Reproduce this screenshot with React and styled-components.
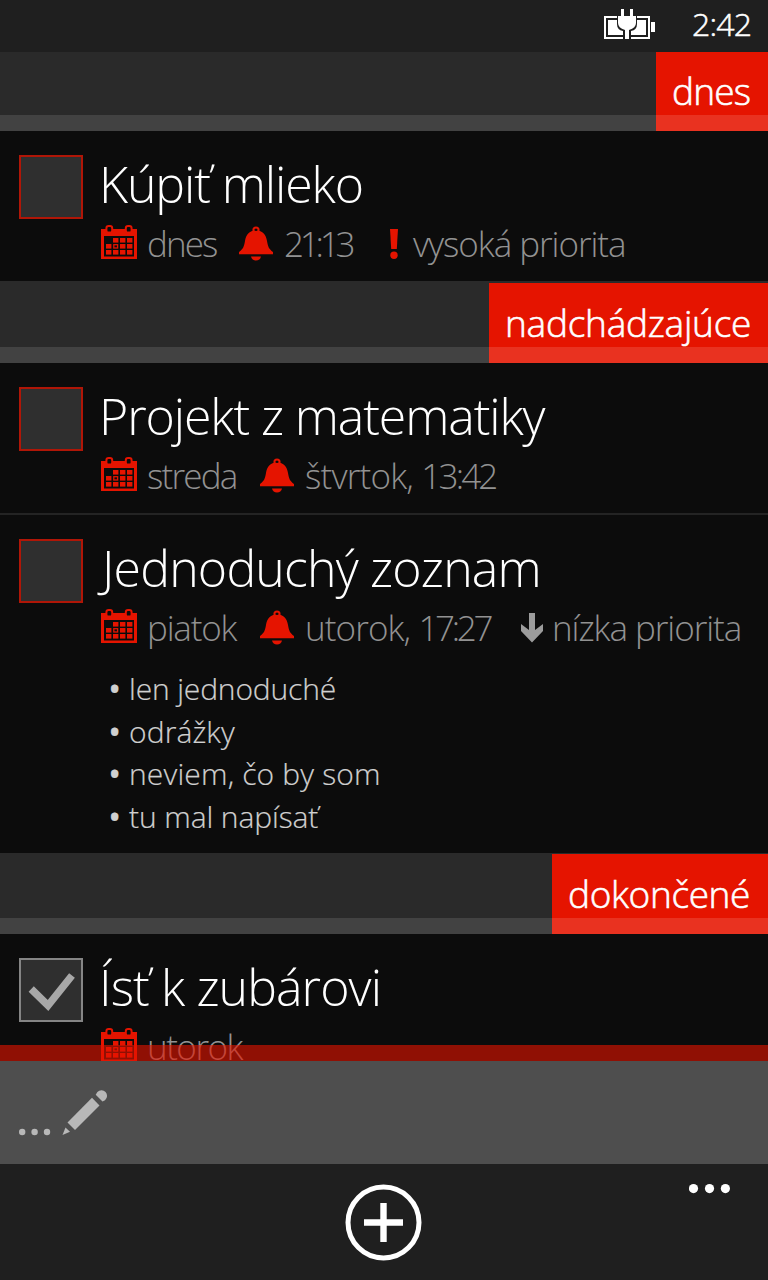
import React from "react";
import styled, { createGlobalStyle } from "styled-components";

const GlobalStyle = createGlobalStyle`
  * { box-sizing: border-box; }
  body {
    margin: 0;
    background: #0c0c0c;
    font-family: "Open Sans", "Noto Sans", sans-serif;
    font-weight: 300;
  }
  svg { display: block; }
`;

const accent = "#e51400";

const Screen = styled.div`
  width: 768px;
  height: 1280px;
  display: flex;
  flex-direction: column;
  overflow: hidden;
  background: #0c0c0c;
  color: #fff;
`;

const StatusBar = styled.header`
  flex: none;
  height: 52px;
  display: flex;
  align-items: flex-start;
  justify-content: flex-end;
  padding: 8px 17px 0 0;
  background: #1f1f1f;
`;

const Clock = styled.span`
  width: 59px;
  margin-left: 36px;
  margin-top: -4px;
  font-size: 32px;
  line-height: 40px;
  font-weight: 300;
  -webkit-text-stroke: 0.5px #fff;
  letter-spacing: ${(p) => p.$spacing}px;
  white-space: nowrap;
`;

const TaskList = styled.main`
  flex: 1;
  min-height: 0;
  overflow: hidden;
`;

const GroupHeader = styled.div`
  display: flex;
  justify-content: flex-end;
  height: ${(p) => p.$height}px;
  padding-top: ${(p) => p.$height - 80}px;
  background: linear-gradient(to top, #424242 16px, #2a2a2a 16px);
`;

const GroupTag = styled.h2`
  margin: ${(p) => (p.$raised ? "-1px 0 0" : "0")};
  width: ${(p) => p.$width}px;
  height: 80px;
  padding: 15px 0 0 16px;
  background: linear-gradient(to top, #e93220 16px, ${accent} 16px);
  font-size: 37px;
  line-height: 50px;
  font-weight: 300;
  -webkit-text-stroke: 0.6px #fff;
  letter-spacing: ${(p) => p.$spacing}px;
  white-space: nowrap;
`;

const Task = styled.article`
  display: flex;
  align-items: flex-start;
  height: ${(p) => p.$height}px;
  padding: 21px 0 0 19px;
  border-bottom: ${(p) => (p.$divided ? "2px solid #242424" : "none")};
`;

const CheckBox = styled.div`
  flex: none;
  width: 64px;
  height: 64px;
  margin: 3px 17px 0 0;
  border: 2px solid ${(p) => (p.$done ? "#858585" : "#b01607")};
  background: #2f2f2f;
`;

const TaskTitle = styled.h1`
  margin: 0 0 0 ${(p) => p.$indent ?? -1}px;
  font-size: 50px;
  line-height: 64px;
  font-weight: 300;
  letter-spacing: ${(p) => p.$spacing}px;
  white-space: nowrap;
`;

const MetaRow = styled.div`
  display: flex;
  height: 48px;
  margin-top: 4px;
  padding-left: 1px;
`;

const Meta = styled.div`
  flex: none;
  display: flex;
  width: ${(p) => p.$width}px;
`;

const MetaIcon = styled.span`
  flex: none;
  width: ${(p) => p.$width}px;
  padding-top: 5px;
`;

const MetaText = styled.span`
  font-size: 35px;
  line-height: 48px;
  color: #929292;
  letter-spacing: ${(p) => p.$spacing}px;
  white-space: nowrap;
`;

const Time = styled.span`
  letter-spacing: ${(p) => p.$spacing}px;
`;

const Notes = styled.ul`
  list-style: none;
  margin: 16px 0 0;
  padding: 0 0 0 9px;
  color: #d0d0d0;
`;

const Note = styled.li`
  display: flex;
  font-size: 30px;
  line-height: 42.7px;
  -webkit-text-stroke: 0.2px #d0d0d0;
  letter-spacing: ${(p) => p.$spacing}px;
  white-space: nowrap;
`;

const Bullet = styled.span`
  width: 20px;
  font-weight: 600;
`;

const ComposeBar = styled.section`
  flex: none;
  position: relative;
  height: 119px;
  margin-top: -16px;
  padding: 28px 0 0 19px;
  border-top: 16px solid rgba(229, 20, 0, 0.61);
  background: #4e4e4e;
  background-clip: padding-box;
`;

const AppBar = styled.footer`
  flex: none;
  height: 116px;
  display: grid;
  grid-template-columns: 345px 1fr auto;
  align-items: start;
  padding: 20px 38px 0 0;
  background: #1f1f1f;
`;

const AddButton = styled.div`
  grid-column: 2;
`;

function BatteryIcon() {
  return (
    <svg width="52" height="32" viewBox="0 0 52 32">
      <path d="M1 9H45V30H1Z" fill="none" stroke="#fff" strokeWidth="2" />
      <path d="M4 12H42V27H4Z" fill="#fff" />
      <path d="M47 14H51V24H47Z" fill="#fff" />
      <path d="M13 6H33V16Q33 22 27 23V32H19V23Q13 22 13 16Z" fill="#1f1f1f" />
      <path d="M17 1H20V8H26V1H29V8H32V15Q32 20 25 22V31H21V22Q14 20 14 15V8H17Z" fill="#fff" />
    </svg>
  );
}

function CalendarIcon() {
  const cells = [[12, 13], [19, 13], [26, 13], [5, 19], [19, 19], [26, 19], [5, 25], [12, 25], [19, 25], [26, 25]];
  return (
    <svg width="36" height="36" viewBox="0 0 36 36">
      <path d="M0 4H36V34H0ZM3 11V31.5H33V11Z" fill={accent} fillRule="evenodd" />
      <rect x="5.4" y="1" width="5.8" height="6.6" rx="2.2" fill="#0c0c0c" stroke={accent} strokeWidth="2" />
      <rect x="24.8" y="1" width="5.8" height="6.6" rx="2.2" fill="#0c0c0c" stroke={accent} strokeWidth="2" />
      {cells.map(([x, y]) => (
        <rect key={`${x}-${y}`} x={x} y={y} width="5.4" height="4.6" fill={accent} />
      ))}
      <rect x="12.8" y="19.7" width="3.8" height="3.3" fill="none" stroke={accent} strokeWidth="1.3" />
    </svg>
  );
}

function BellIcon() {
  return (
    <svg width="34" height="36" viewBox="0 0 34 36">
      <circle cx="17" cy="5" r="2.6" fill="none" stroke={accent} strokeWidth="2" />
      <path d="M17 5.6C24 5.6 27 10 28 16C29 22 30 24 34 27V29.3H0V27C4 24 5 22 6 16C7 10 10 5.6 17 5.6Z" fill={accent} />
      <circle cx="17" cy="5" r="1.1" fill="#0c0c0c" />
      <path d="M12 31.5H22Q21 35.6 17 35.6Q13 35.6 12 31.5Z" fill={accent} />
    </svg>
  );
}

function HighIcon() {
  return (
    <svg width="8" height="36" viewBox="0 0 8 36">
      <path d="M0 4H8L6.8 24H1.2Z" fill={accent} />
      <circle cx="4" cy="30.2" r="3.7" fill={accent} />
    </svg>
  );
}

function LowIcon() {
  return (
    <svg width="22" height="36" viewBox="0 0 22 36">
      <path d="M8 4H14V21L22 15V22L11 33.5L0 22V15L8 21Z" fill="#9c9c9c" />
    </svg>
  );
}

function CheckIcon() {
  return (
    <svg width="60" height="60" viewBox="0 0 60 60">
      <path d="M10.2 29L27 45.5L51 15.5" fill="none" stroke="#a8a8a8" strokeWidth="7.4" />
    </svg>
  );
}

function ComposeIcon() {
  return (
    <svg width="90" height="50" viewBox="0 0 90 50">
      <g fill="#b8b8b8">
        <circle cx="3.2" cy="43" r="3.2" />
        <circle cx="15.6" cy="43" r="3.2" />
        <circle cx="28" cy="43" r="3.2" />
        <path d="M43.5 46L46.5 38.5L51 42.7Z" />
        <path d="M48.5 33.5L73 8.8L80.5 16.5L56 41Z" />
        <path d="M76.7 5.8L78.4 3A5.6 5.6 0 1 1 86 11.2L83.5 12.6Z" />
      </g>
    </svg>
  );
}

function AddIcon() {
  return (
    <svg width="78" height="78" viewBox="0 0 78 78">
      <circle cx="38.5" cy="38.5" r="35.5" fill="none" stroke="#fff" strokeWidth="5" />
      <path d="M19 38.5H58M38.5 19V58" stroke="#fff" strokeWidth="6.4" />
    </svg>
  );
}

function MoreIcon() {
  return (
    <svg width="41" height="10" viewBox="0 0 41 10" fill="#fff">
      <circle cx="4.5" cy="4.6" r="4.6" />
      <circle cx="20.5" cy="4.6" r="4.6" />
      <circle cx="36.4" cy="4.6" r="4.6" />
    </svg>
  );
}

const icons = {
  date: { Icon: CalendarIcon, width: 46 },
  alarm: { Icon: BellIcon, width: 45 },
  high: { Icon: HighIcon, width: 23 },
  low: { Icon: LowIcon, width: 31 },
};

function Group({ label, width, height, spacing, raised }) {
  return (
    <GroupHeader $height={height}>
      <GroupTag $width={width} $spacing={spacing} $raised={raised}>{label}</GroupTag>
    </GroupHeader>
  );
}

function TaskItem({ title, indent, spacing, height, done, divided, meta, notes }) {
  return (
    <Task $height={height} $divided={divided}>
      <CheckBox $done={done}>{done && <CheckIcon />}</CheckBox>
      <div>
        <TaskTitle $spacing={spacing} $indent={indent}>{title}</TaskTitle>
        <MetaRow>
          {meta.map(({ kind, text, width, spacing: s, time, timeSpacing }) => {
            const { Icon, width: iconWidth } = icons[kind];
            return (
              <Meta key={kind} $width={width}>
                <MetaIcon $width={iconWidth}><Icon /></MetaIcon>
                <MetaText $spacing={s}>
                  {text}
                  {time && <Time $spacing={timeSpacing}>{time}</Time>}
                </MetaText>
              </Meta>
            );
          })}
        </MetaRow>
        {notes && (
          <Notes>
            {notes.map(([text, s]) => (
              <Note key={text} $spacing={s}><Bullet>•</Bullet>{text}</Note>
            ))}
          </Notes>
        )}
      </div>
    </Task>
  );
}

export default function App() {
  return (
    <>
      <GlobalStyle />
      <Screen>
        <StatusBar>
          <BatteryIcon />
          <Clock $spacing={-0.8}>2:42</Clock>
        </StatusBar>
        <TaskList>
          <Group label="dnes" width={112} height={79} spacing={-0.8} raised />
          <TaskItem
            title="Kúpiť mlieko" spacing={-1.1} height={150}
            meta={[
              { kind: "date", text: "dnes", width: 138, spacing: -1.9 },
              { kind: "alarm", time: "21:13", timeSpacing: -4.2, width: 151, spacing: 0 },
              { kind: "high", text: "vysoká priorita", width: 240, spacing: -1.05 },
            ]}
          />
          <Group label="nadchádzajúce" width={279} height={82} spacing={-0.25} />
          <TaskItem
            title="Projekt z matematiky" spacing={-1.1} height={152} divided
            meta={[
              { kind: "date", text: "streda", width: 159, spacing: -1.8 },
              { kind: "alarm", text: "štvrtok, ", time: "13:42", timeSpacing: -2.8, width: 240, spacing: -0.8 },
            ]}
          />
          <TaskItem
            title="Jednoduchý zoznam" indent={2} spacing={-0.8} height={338}
            meta={[
              { kind: "date", text: "piatok", width: 159, spacing: -1.2 },
              { kind: "alarm", text: "utorok, ", time: "17:27", timeSpacing: -3.3, width: 261, spacing: -0.9 },
              { kind: "low", text: "nízka priorita", width: 230, spacing: -1.05 },
            ]}
            notes={[["len jednoduché", -0.15], ["odrážky", 0.1], ["neviem, čo by som", 0.15], ["tu mal napísať", -0.1]]}
          />
          <Group label="dokončené" width={216} height={81} spacing={-0.35} />
          <TaskItem
            title="Ísť k zubárovi" spacing={-0.9} height={150} done
            meta={[{ kind: "date", text: "utorok", width: 159, spacing: -1.5 }]}
          />
        </TaskList>
        <ComposeBar><ComposeIcon /></ComposeBar>
        <AppBar>
          <AddButton><AddIcon /></AddButton>
          <MoreIcon />
        </AppBar>
      </Screen>
    </>
  );
}
